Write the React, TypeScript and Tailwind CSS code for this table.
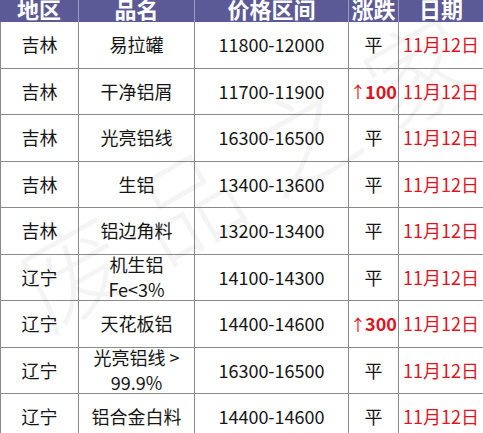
import React from "react";

type Row = {
  region: string;
  name: string[];
  price: string;
  change: string | null; // null means 平
};

const rows: Row[] = [
  { region: "吉林", name: ["易拉罐"], price: "11800-12000", change: null },
  { region: "吉林", name: ["干净铝屑"], price: "11700-11900", change: "100" },
  { region: "吉林", name: ["光亮铝线"], price: "16300-16500", change: null },
  { region: "吉林", name: ["生铝"], price: "13400-13600", change: null },
  { region: "吉林", name: ["铝边角料"], price: "13200-13400", change: null },
  { region: "辽宁", name: ["机生铝", "Fe<3%"], price: "14100-14300", change: null },
  { region: "辽宁", name: ["天花板铝"], price: "14400-14600", change: "300" },
  { region: "辽宁", name: ["光亮铝线 >", "99.9%"], price: "16300-16500", change: null },
  { region: "辽宁", name: ["铝合金白料"], price: "14400-14600", change: null },
];

const headers = ["地区", "品名", "价格区间", "涨跌", "日期"];

const cell = "flex items-center justify-center border-r border-b border-[#8a8a8a] h-[46.5px] text-center";

export default function App() {
  return (
    <div
      className="relative w-[483px] h-[433px] overflow-hidden bg-white text-[#151515]"
      style={{ fontFamily: '"Noto Sans CJK SC", "Noto Sans", sans-serif' }}
    >
      <div className="grid grid-cols-[79px_116px_154px_50px_84px] text-[18px]">
        {headers.map((h, i) => (
          <div
            key={h}
            className={`flex items-end justify-center h-[22px] bg-[#5c5a96] text-white font-bold text-[22px] leading-none overflow-hidden ${
              i < headers.length - 1 ? "border-r border-white/40" : ""
            }`}
          >
            <span className="mb-[3px]">{h}</span>
          </div>
        ))}

        {rows.map((r, idx) => (
          <React.Fragment key={idx}>
            <div className={`${cell} border-l`}>{r.region}</div>
            <div className={`${cell} flex-col leading-[25px]`}>
              {r.name.map((n) => (
                <span key={n}>{n}</span>
              ))}
            </div>
            <div className={cell}>{r.price}</div>
            <div className={cell}>
              {r.change ? (
                <span className="text-[#e0141e] font-bold flex items-center">
                  <span className="font-normal text-[16px] -mr-[1px]">↑</span>
                  {r.change}
                </span>
              ) : (
                "平"
              )}
            </div>
            <div className={`${cell} border-r-0 text-[#e0141e]`}>11月12日</div>
          </React.Fragment>
        ))}
      </div>

      {/* watermark */}
      <div className="pointer-events-none absolute left-[255px] top-[160px] -translate-x-1/2 -translate-y-1/2 -rotate-[30deg] whitespace-nowrap text-[105px] font-light leading-none tracking-[28px] text-black/[0.045]">
        废品之家
      </div>
    </div>
  );
}
